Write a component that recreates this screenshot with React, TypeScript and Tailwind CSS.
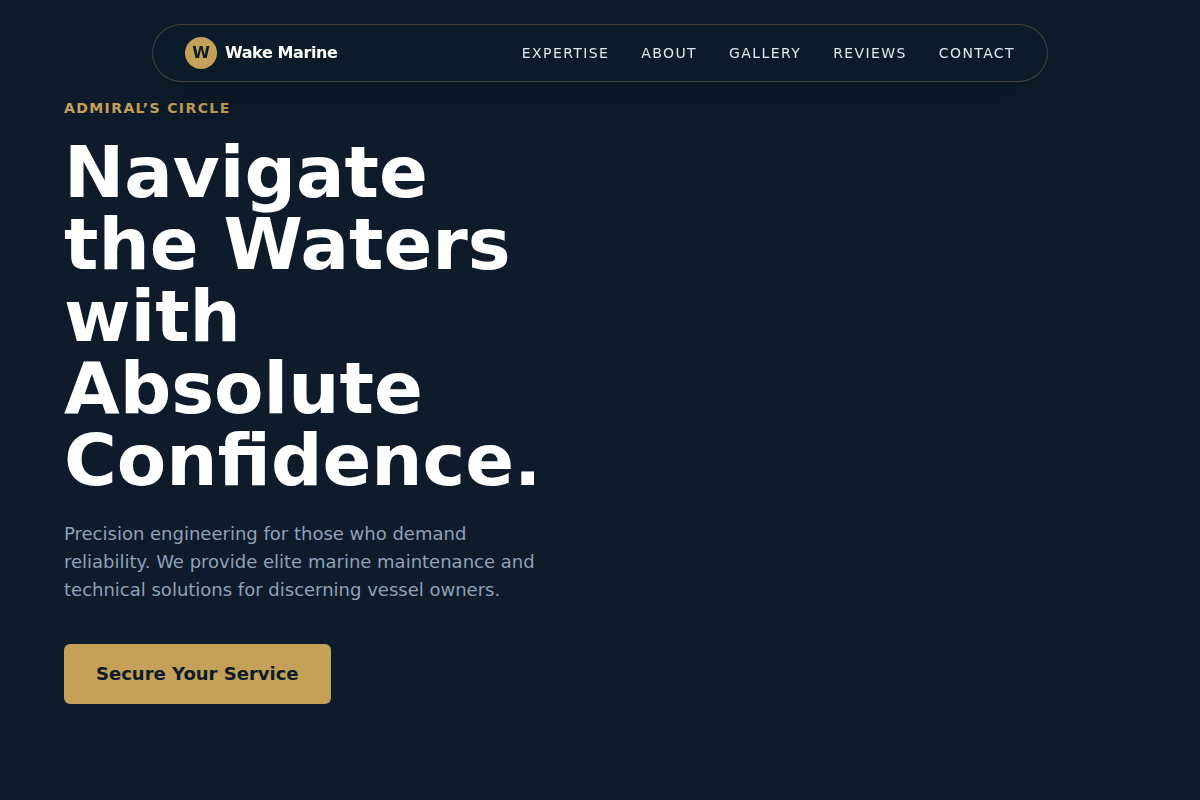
const navLinks = [
  { label: "Expertise", href: "#expertise" },
  { label: "About", href: "#about" },
  { label: "Gallery", href: "#gallery" },
  { label: "Reviews", href: "#reviews" },
  { label: "Contact", href: "#contact" },
];

function Navbar() {
  return (
    <header className="fixed inset-x-0 top-6 z-50 flex justify-center px-4">
      <nav className="flex w-full max-w-4xl items-center justify-between rounded-full border border-[#c5a059]/30 bg-[#0d1b2a]/80 px-8 py-3 shadow-2xl backdrop-blur-md">
        <a href="#top" className="flex items-center gap-2">
          <span className="flex h-8 w-8 items-center justify-center rounded-full bg-[#c5a059] font-bold text-[#0d1b2a]">
            W
          </span>
          <span className="font-semibold tracking-tight text-white">
            Wake Marine
          </span>
        </a>
        <div className="flex gap-8">
          {navLinks.map((link) => (
            <a
              key={link.href}
              href={link.href}
              className="text-sm tracking-widest text-slate-200 uppercase transition-colors hover:text-[#c5a059]"
            >
              {link.label}
            </a>
          ))}
        </div>
      </nav>
    </header>
  );
}

function Hero() {
  return (
    <section id="top" className="grid min-h-screen grid-cols-2 items-center">
      <div className="px-16">
        <p className="mb-4 text-sm leading-6 font-semibold tracking-widest text-[#c5a059] uppercase">
          Admiral’s Circle
        </p>
        <h1 className="mb-6 text-7xl leading-none font-bold text-white">
          Navigate the Waters with Absolute Confidence.
        </h1>
        <p className="mb-10 max-w-lg text-lg text-slate-400">
          Precision engineering for those who demand reliability. We provide
          elite marine maintenance and technical solutions for discerning
          vessel owners.
        </p>
        <button
          type="button"
          className="rounded-md bg-[#c5a059] px-8 py-4 text-lg font-semibold text-[#0d1b2a] transition-colors hover:bg-[#d4b06a]"
        >
          Secure Your Service
        </button>
      </div>
    </section>
  );
}

export default function App() {
  return (
    <main className="min-h-screen bg-[#0d1b2a] font-['DejaVu_Sans',sans-serif]">
      <Navbar />
      <Hero />
    </main>
  );
}
